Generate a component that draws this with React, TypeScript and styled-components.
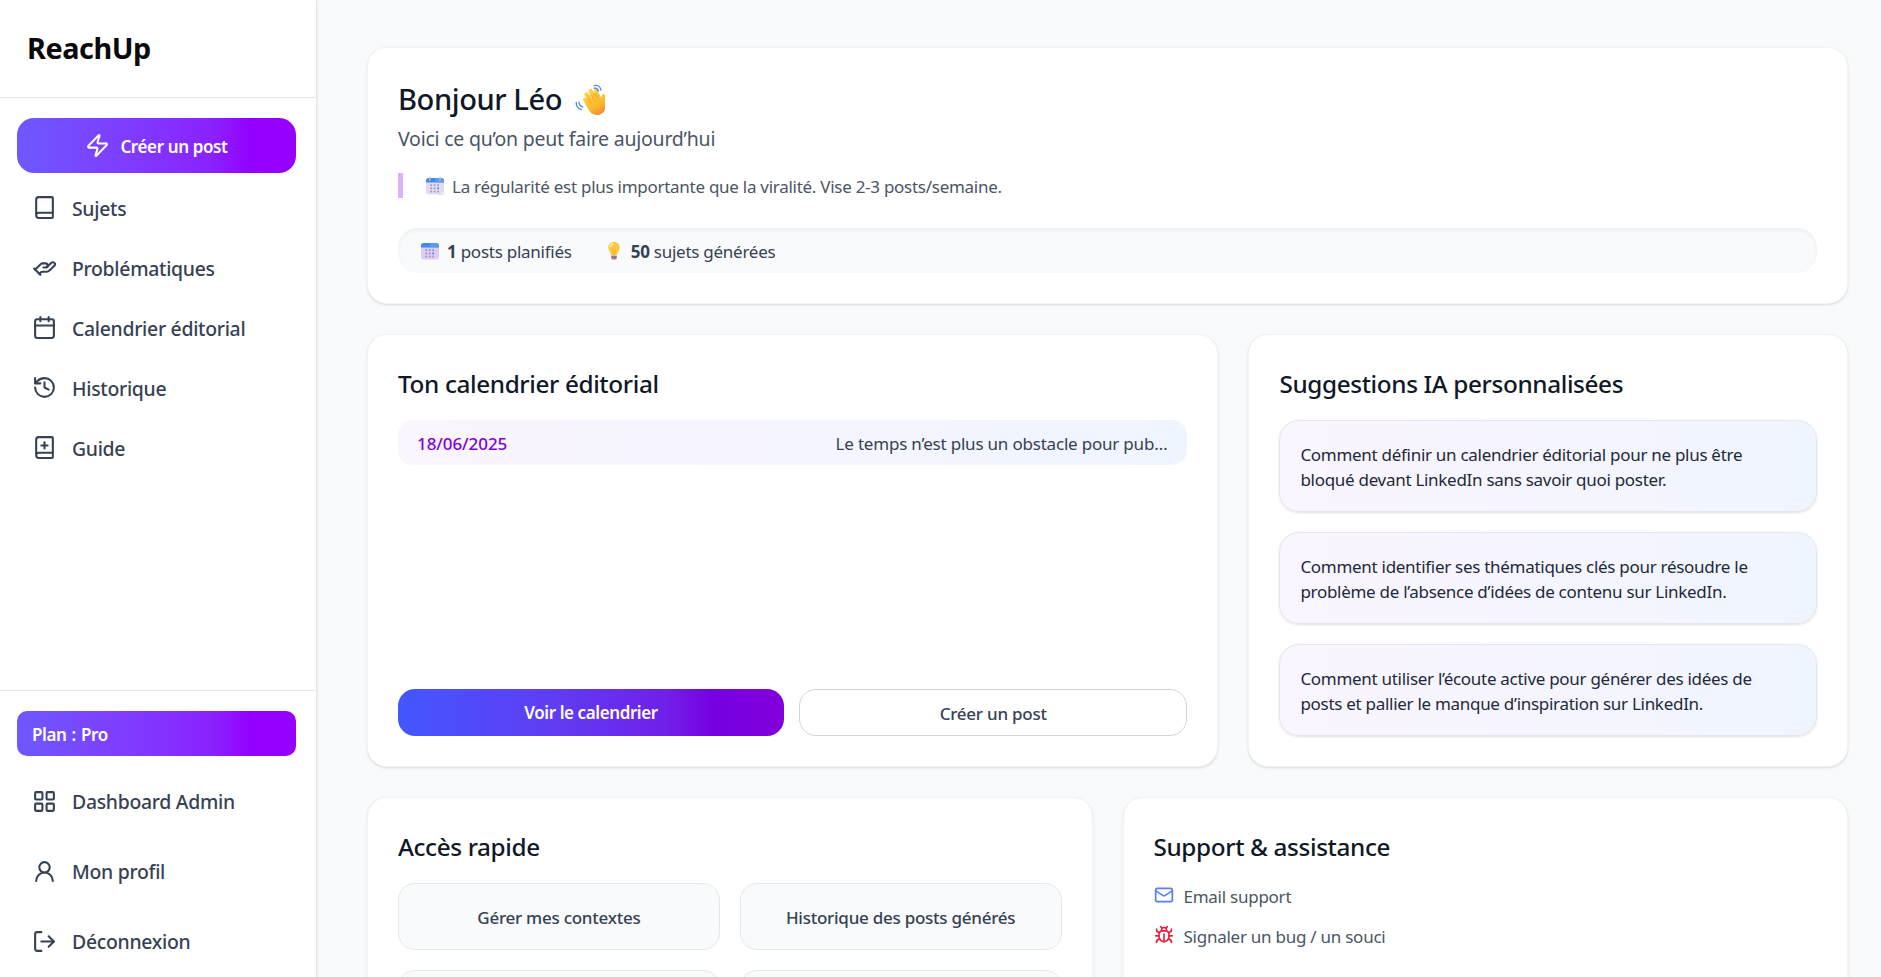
/**
 * Dashboard — ReachUp home screen: sidebar navigation plus overview cards.
 */

import React from 'react';
import styled, { createGlobalStyle, css } from 'styled-components';
import {
  Book,
  BookPlus,
  Bug,
  Calendar,
  HandHelping,
  History,
  LayoutGrid,
  LogOut,
  Mail,
  UserRound,
  Zap,
  type LucideIcon,
} from 'lucide-react';

// ── Data ──────────────────────────────────────────────────

interface NavEntry {
  label: string;
  icon: LucideIcon;
}

const mainNav: NavEntry[] = [
  { label: 'Sujets', icon: Book },
  { label: 'Problématiques', icon: HandHelping },
  { label: 'Calendrier éditorial', icon: Calendar },
  { label: 'Historique', icon: History },
  { label: 'Guide', icon: BookPlus },
];

const accountNav: NavEntry[] = [
  { label: 'Dashboard Admin', icon: LayoutGrid },
  { label: 'Mon profil', icon: UserRound },
  { label: 'Déconnexion', icon: LogOut },
];

const suggestions = [
  'Comment définir un calendrier éditorial pour ne plus être bloqué devant LinkedIn sans savoir quoi poster.',
  'Comment identifier ses thématiques clés pour résoudre le problème de l’absence d’idées de contenu sur LinkedIn.',
  'Comment utiliser l’écoute active pour générer des idées de posts et pallier le manque d’inspiration sur LinkedIn.',
];

const shortcuts = ['Gérer mes contextes', 'Historique des posts générés', '', ''];

// ── Global ────────────────────────────────────────────────

const GlobalStyle = createGlobalStyle`
  *, *::before, *::after {
    box-sizing: border-box;
    margin: 0;
    padding: 0;
    letter-spacing: -0.015em;
  }

  body {
    background: #f9fafb;
    font-family: 'Noto Sans', 'Open Sans', sans-serif;
    font-size: 17px;
    line-height: 25px;
    color: #364153;
    overflow: hidden;
  }

  button {
    font: inherit;
    color: inherit;
    border: none;
    background: none;
    cursor: pointer;
  }
`;

// ── Layout ────────────────────────────────────────────────

const Shell = styled.div`
  display: flex;
  height: 100vh;
  overflow: hidden;
`;

const Sidebar = styled.aside`
  display: flex;
  flex-direction: column;
  flex: none;
  width: 317px;
  background: #fff;
  border-right: 1px solid #e5e7eb;
  box-shadow: 0 1px 3px rgba(0, 0, 0, 0.1), 0 1px 2px -1px rgba(0, 0, 0, 0.1);
`;

const Main = styled.main`
  flex: 1;
  display: flex;
  flex-direction: column;
  gap: 30px;
  padding: 47px 33px 0 50px;
  overflow: hidden;
`;

const Columns = styled.div<{ $split: string; $height: number }>`
  display: grid;
  flex: none;
  grid-template-columns: ${({ $split }) => $split};
  gap: 30px;
  height: ${({ $height }) => $height}px;
`;

const Card = styled.section`
  display: flex;
  flex-direction: column;
  flex: none;
  min-width: 0;
  padding: 30px;
  background: #fff;
  border: 1px solid #f3f4f6;
  border-radius: 20px;
  box-shadow: 0 1px 3px rgba(0, 0, 0, 0.1), 0 1px 2px -1px rgba(0, 0, 0, 0.1);
`;

const CardTitle = styled.h2`
  padding-top: 1px;
  margin-bottom: 19px;
  font-size: 24.3px;
  font-weight: 500;
  line-height: 35px;
  color: #101828;
`;

// ── Sidebar parts ─────────────────────────────────────────

const brandGradient = css`
  background: linear-gradient(to right, #6e58ff 0%, #7f3cff 40%, #8a22ff 70%, #9300ff 84%, #9600fc 100%);
`;

const Brand = styled.div`
  height: 98px;
  padding: 28px 27px 0;
  font-size: 28.8px;
  font-weight: 700;
  line-height: 40px;
  color: #0a0a0a;
  border-bottom: 1px solid #e5e7eb;
`;

const Nav = styled.nav<{ $gap: number }>`
  display: flex;
  flex-direction: column;
  gap: ${({ $gap }) => $gap}px;
  padding: 20px 20px 11px 17px;
`;

const MainNav = styled(Nav)`
  a svg {
    margin-bottom: 1px;
  }
`;

const AccountNav = styled(Nav)`
  margin-top: auto;
  border-top: 1px solid #e5e7eb;
`;

const CreateButton = styled.button`
  ${brandGradient}
  display: flex;
  align-items: center;
  justify-content: center;
  gap: 10px;
  height: 55px;
  color: #fff;
  font-weight: 600;
  font-size: 17px;
  border-radius: 17px;

  span {
    padding-top: 1px;
    letter-spacing: -0.022em;
  }
`;

const PlanBadge = styled.div`
  ${brandGradient}
  height: 45px;
  padding: 11px 15px 0;
  color: #fff;
  font-weight: 600;
  font-size: 17px;
  line-height: 25px;
  letter-spacing: -0.022em;
  word-spacing: 1px;
  border-radius: 10px;
`;

const NavLink = styled.a`
  display: flex;
  align-items: center;
  gap: 15px;
  height: 50px;
  padding: 0 15px;
  font-size: 19.4px;
  font-weight: 500;
  color: #364153;

  span {
    padding-top: 1px;
  }
`;

// ── Card parts ────────────────────────────────────────────

const Greeting = styled.h1`
  display: flex;
  align-items: center;
  gap: 13px;
  height: 40px;
  font-size: 29.1px;
  font-weight: 500;
  color: #101828;

  span {
    padding-top: 2px;
  }

  svg {
    margin-top: 3px;
  }
`;

const Subtitle = styled.p`
  margin-top: 6px;
  font-size: 19.5px;
  line-height: 29px;
  letter-spacing: -0.012em;
  color: #4a5565;
`;

const Tip = styled.blockquote`
  display: flex;
  align-items: center;
  gap: 8px;
  height: 25px;
  margin-top: 20px;
  padding-left: 23px;
  border-left: 5px solid #dab2ff;
  color: #4a5565;

  span {
    padding-top: 2px;
    letter-spacing: -0.016em;
  }
`;

const Stats = styled.div`
  display: flex;
  align-items: center;
  height: 45px;
  margin-top: 30px;
  padding: 0 23px;
  background: #f9fafb;
  border-radius: 20px;
  box-shadow: inset 0 2px 4px rgba(0, 0, 0, 0.05);
`;

const Stat = styled.div`
  display: flex;
  align-items: center;
  gap: 8px;
  margin-right: 33px;

  span {
    padding-top: 1px;
  }

  b {
    font-weight: 700;
  }
`;

const ScheduledPost = styled.div`
  display: flex;
  align-items: center;
  justify-content: space-between;
  height: 45px;
  padding: 1px 20px 0 19px;
  border-radius: 15px;
  background: linear-gradient(to right, #faf5ff, #f5f5ff 50%, #eff5ff);
`;

const PostDate = styled.span`
  font-weight: 500;
  letter-spacing: -0.004em;
  color: #8200db;
`;

const PostTitle = styled.span`
  letter-spacing: -0.012em;
`;

const Actions = styled.div`
  display: grid;
  grid-template-columns: 386px 1fr;
  gap: 15px;
  margin-top: auto;
`;

const ActionButton = styled.button<{ $primary?: boolean }>`
  height: 47px;
  padding-top: ${({ $primary }) => ($primary ? 0 : 1)}px;
  font-weight: ${({ $primary }) => ($primary ? 600 : 500)};
  letter-spacing: ${({ $primary }) => ($primary ? '-0.024em' : '-0.014em')};
  border-radius: 17px;
  ${({ $primary }) =>
    $primary
      ? css`
          color: #fff;
          background: linear-gradient(to right, #4357ff 0%, #5f3df4 40%, #701fe8 70%, #7600e1 82%, #8200db 100%);
        `
      : css`
          color: #364153;
          border: 1px solid #d1d5dc;
        `}
`;

const SuggestionList = styled.div`
  display: flex;
  flex-direction: column;
  gap: 20px;
`;

const Suggestion = styled.p`
  height: 92px;
  padding: 21px 32px 0 20px;
  letter-spacing: -0.017em;
  color: #1e2939;
  border: 1px solid #e5e7eb;
  border-radius: 20px;
  background: linear-gradient(to right, #faf5ff, #f5f5ff 50%, #eff5ff);
  box-shadow: 0 1px 3px rgba(0, 0, 0, 0.1), 0 1px 2px -1px rgba(0, 0, 0, 0.1);
`;

const ShortcutGrid = styled.div`
  display: grid;
  grid-template-columns: 1fr 1fr;
  gap: 20px;
`;

const Shortcut = styled.button`
  height: 67px;
  padding-top: 1px;
  font-weight: 500;
  color: #364153;
  background: #f9fafb;
  border: 1px solid #e5e7eb;
  border-radius: 17px;
`;

const SupportLink = styled.a`
  display: flex;
  align-items: center;
  gap: 10px;
  height: 25px;
  margin-bottom: 15px;
  color: #4a5565;

  svg {
    flex: none;
    margin-bottom: 1px;
  }

  span {
    padding-top: 2px;
  }
`;

// ── Emoji drawings ────────────────────────────────────────

const WaveEmoji = () => (
  <svg width="31" height="32" viewBox="0 0 31 32">
    <defs>
      <linearGradient id="hand" x1="0" y1="0" x2="0.6" y2="1">
        <stop offset="0" stopColor="#ffcf3f" />
        <stop offset="0.7" stopColor="#fbb72c" />
        <stop offset="1" stopColor="#f3903a" />
      </linearGradient>
    </defs>
    <g stroke="url(#hand)" strokeLinecap="round" fill="none">
      <path d="M10 15.5l6 7" strokeWidth="4" />
      <path d="M11.5 10.5l7.5 10" strokeWidth="4.2" />
      <path d="M15.8 7.3l6 10" strokeWidth="4.2" />
      <path d="M20.8 7.2l4 9" strokeWidth="4" />
    </g>
    <path
      d="M9.5 18.5L23 10.5l3.6 3.2c.1-1.6.2-2.6.9-3.3.9-.8 2.2-.5 2.5.6V25c-.8 3.5-4 6-7.8 6-3.2 0-5.7-1.2-7.7-3.8z"
      fill="url(#hand)"
    />
    <path d="M12.5 14.5l4 4.7M15.8 11.2l4 5.5M20 9.5l3 5" stroke="#e99a20" strokeWidth="0.8" fill="none" />
    <g stroke="#4a86d8" strokeWidth="1.3" strokeLinecap="round" fill="none">
      <path d="M19.5 1.6c3-.6 5.8 1.2 6.500 4.500M19 4.200c2.200-.3 3.700.7 4.300 2.800" />
      <path d="M1.200 18.500c0 3.500 2 6.200 5 7M4 18.200c.1 2.300 1.400 4 3.600 4.700" />
    </g>
  </svg>
);

const DOTS_X = [4.4, 7.8, 11.3];
const DOTS_Y = [7.3, 10.5, 13.7];

const CalendarEmoji: React.FC<{ spiral?: boolean }> = ({ spiral }) => (
  <svg width="18" height="18" viewBox="0 0 18 18">
    <rect x="0" y="1" width="18" height="16.5" rx="2.8" fill={spiral ? '#e3dcf0' : '#dccdf3'} />
    <path d="M0 5.500V4a3 3 0 0 1 3-3h12a3 3 0 0 1 3 3v1.500z" fill="#4089ee" />
    <path d="M9 5.500h9V4a3 3 0 0 0-3-3H9z" fill="#62a6f8" opacity="0.6" />
    {spiral && <path d="M3.800 1v2M14 1v2" stroke="#b8b4c5" strokeWidth="1.8" strokeLinecap="round" />}
    {DOTS_Y.map((y, row) =>
      DOTS_X.map((x, col) => (
        <rect
          key={`${row}-${col}`}
          x={x}
          y={y}
          width="1.7"
          height="1.7"
          fill={row === 1 && col === 2 ? '#2f86f5' : '#9c94b2'}
        />
      ))
    )}
    {spiral && (
      <path d="M12.800 17.500l5.200-5v2.200a2.800 2.800 0 0 1-2.800 2.800z" fill="#f6f2fb" stroke="#c5bdd3" strokeWidth="0.5" />
    )}
  </svg>
);

const BulbEmoji = () => (
  <svg width="18" height="18" viewBox="0 0 18 18">
    <path
      d="M9 0C5.700 0 3.300 2.500 3.300 5.700c0 3.100 2.300 4.300 2.700 7.300h6c.4-3 2.700-4.200 2.700-7.300C14.700 2.500 12.300 0 9 0z"
      fill="#fcc83e"
    />
    <path d="M7.200 6.500L8.300 12h1.400l1.100-5.500" stroke="#f3ac35" strokeWidth="0.8" fill="none" />
    <path d="M5.500 4.500C5.800 3 6.700 2 8 1.700" stroke="#fff3a8" strokeWidth="1.5" strokeLinecap="round" fill="none" />
    <path d="M6.300 13.500h5.400v2.700c0 .8-.6 1.300-1.400 1.300H7.700c-.8 0-1.400-.5-1.400-1.300z" fill="#a08494" />
    <path d="M6.300 15h5.400" stroke="#6e5b70" strokeWidth="0.7" />
  </svg>
);

// ── App ───────────────────────────────────────────────────

const NavItem: React.FC<NavEntry> = ({ label, icon: Icon }) => (
  <NavLink>
    <Icon size={25} />
    <span>{label}</span>
  </NavLink>
);

export default function App() {
  return (
    <Shell>
      <GlobalStyle />
      <Sidebar>
        <Brand>ReachUp</Brand>
        <MainNav $gap={10}>
          <CreateButton>
            <Zap size={25} />
            <span>Créer un post</span>
          </CreateButton>
          {mainNav.map((entry) => (
            <NavItem key={entry.label} {...entry} />
          ))}
        </MainNav>
        <AccountNav $gap={20}>
          <PlanBadge>Plan : Pro</PlanBadge>
          {accountNav.map((entry) => (
            <NavItem key={entry.label} {...entry} />
          ))}
        </AccountNav>
      </Sidebar>

      <Main>
        <Card>
          <Greeting>
            <span>Bonjour Léo</span>
            <WaveEmoji />
          </Greeting>
          <Subtitle>Voici ce qu’on peut faire aujourd’hui</Subtitle>
          <Tip>
            <CalendarEmoji spiral />
            <span>La régularité est plus importante que la viralité. Vise 2-3 posts/semaine.</span>
          </Tip>
          <Stats>
            <Stat>
              <CalendarEmoji />
              <span>
                <b>1</b> posts planifiés
              </span>
            </Stat>
            <Stat>
              <BulbEmoji />
              <span>
                <b>50</b> sujets générées
              </span>
            </Stat>
          </Stats>
        </Card>

        <Columns $split="851.4px 1fr" $height={433}>
          <Card>
            <CardTitle>Ton calendrier éditorial</CardTitle>
            <ScheduledPost>
              <PostDate>18/06/2025</PostDate>
              <PostTitle>Le temps n’est plus un obstacle pour pub…</PostTitle>
            </ScheduledPost>
            <Actions>
              <ActionButton $primary>Voir le calendrier</ActionButton>
              <ActionButton>Créer un post</ActionButton>
            </Actions>
          </Card>
          <Card>
            <CardTitle>Suggestions IA personnalisées</CardTitle>
            <SuggestionList>
              {suggestions.map((text) => (
                <Suggestion key={text}>{text}</Suggestion>
              ))}
            </SuggestionList>
          </Card>
        </Columns>

        <Columns $split="1fr 1fr" $height={272}>
          <Card>
            <CardTitle>Accès rapide</CardTitle>
            <ShortcutGrid>
              {shortcuts.map((label, i) => (
                <Shortcut key={i}>{label}</Shortcut>
              ))}
            </ShortcutGrid>
          </Card>
          <Card>
            <CardTitle>Support &amp; assistance</CardTitle>
            <SupportLink>
              <Mail size={20} color="#5580f6" />
              <span>Email support</span>
            </SupportLink>
            <SupportLink>
              <Bug size={20} color="#e7233f" />
              <span>Signaler un bug / un souci</span>
            </SupportLink>
          </Card>
        </Columns>
      </Main>
    </Shell>
  );
}
